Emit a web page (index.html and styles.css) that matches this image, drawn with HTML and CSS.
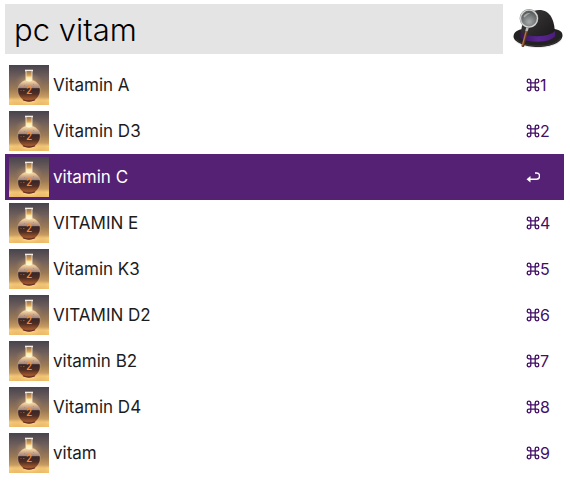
FILE: index.html
```html
<!DOCTYPE html>
<html lang="en">
<head>
<meta charset="utf-8">
<title>Launcher</title>
<link rel="stylesheet" href="styles.css">
</head>
<body>
<svg class="defs" aria-hidden="true">
  <defs>
    <linearGradient id="wall" x1="0" y1="0" x2="0" y2="1">
      <stop offset="0" stop-color="#47434d"/>
      <stop offset=".3" stop-color="#6f5f5b"/>
      <stop offset=".6" stop-color="#9c7a55"/>
      <stop offset=".8" stop-color="#c89c60"/>
      <stop offset=".88" stop-color="#f5cc7c"/>
      <stop offset="1" stop-color="#f0bd66"/>
    </linearGradient>
    <radialGradient id="glow" cx=".5" cy=".5" r=".5">
      <stop offset="0" stop-color="#ffeaa0"/>
      <stop offset=".4" stop-color="#f6c675" stop-opacity=".6"/>
      <stop offset="1" stop-color="#d39b5c" stop-opacity="0"/>
    </radialGradient>
    <linearGradient id="bulb" gradientUnits="userSpaceOnUse" x1="0" y1="14" x2="0" y2="37">
      <stop offset="0" stop-color="#fff0c0"/>
      <stop offset=".12" stop-color="#f2cf98"/>
      <stop offset=".25" stop-color="#c9a68c"/>
      <stop offset=".38" stop-color="#a38379"/>
      <stop offset=".42" stop-color="#35262a"/>
      <stop offset=".65" stop-color="#512d22"/>
      <stop offset=".88" stop-color="#a3592e"/>
      <stop offset="1" stop-color="#6b3020"/>
    </linearGradient>
    <linearGradient id="neck" x1="0" y1="0" x2="0" y2="1">
      <stop offset="0" stop-color="#9c7c5c"/>
      <stop offset=".35" stop-color="#e0a24e"/>
      <stop offset=".6" stop-color="#fff0b4"/>
      <stop offset="1" stop-color="#fff8d8"/>
    </linearGradient>
    <symbol id="flask" viewBox="0 0 40 40">
      <rect width="40" height="40" fill="url(#wall)"/>
      <ellipse cx="20" cy="36" rx="19" ry="7" fill="url(#glow)"/>
      <ellipse cx="20" cy="17" rx="14" ry="10" fill="url(#glow)" opacity=".5"/>
      <path d="M17 14V15C12 16.500 8.800 20.500 8.800 25.500C8.800 29.800 11.500 33.500 15 35.500Q20 37.500 25 35.500C28.500 33.500 31.200 29.800 31.200 25.500C31.200 20.500 28 16.500 23 15V14Z" fill="url(#bulb)" stroke="#e0bda0" stroke-opacity=".6" stroke-width=".7"/>
      <path d="M17 7H23V15.500Q20 17.500 17 15.500Z" fill="url(#neck)"/>
      <path d="M17 6V15M23 6V15" stroke="#f3e2cb" stroke-width=".9"/>
      <path d="M16 5.500H24" stroke="#f7eee2" stroke-width="1.600"/>
      <path d="M14 34.800Q20 37.500 26 34.800" fill="none" stroke="#65291d" stroke-width="1.200"/>
      <path d="M11.500 25.500H12.500M14 25.500H15.500M15 20.500H16M24 19.500H25M24 22H25" stroke="#c97832" stroke-width=".6"/>
      <text x="20" y="29" class="flask-mark">2</text>
    </symbol>
    <symbol id="cmd" viewBox="0 0 14 14">
      <path d="M4.800 4.800H9.200V9.200H4.800ZM4.800 4.800H3A1.800 1.800 0 1 1 4.800 3ZM9.200 4.800V3A1.800 1.800 0 1 1 11 4.800ZM9.200 9.200H11A1.800 1.800 0 1 1 9.200 11ZM4.800 9.200V11A1.800 1.800 0 1 1 3 9.200Z" fill="none" stroke="currentColor" stroke-width="1.300"/>
    </symbol>
    <linearGradient id="felt" x1="0" y1="0" x2="1" y2="1">
      <stop offset="0" stop-color="#3c393a"/>
      <stop offset=".4" stop-color="#302d2e"/>
      <stop offset="1" stop-color="#171516"/>
    </linearGradient>
    <linearGradient id="band" x1="0" y1="0" x2="1" y2="0">
      <stop offset="0" stop-color="#35175c"/>
      <stop offset=".5" stop-color="#5a2591"/>
      <stop offset="1" stop-color="#4a1d7a"/>
    </linearGradient>
    <radialGradient id="lens" cx=".5" cy=".7" r=".7">
      <stop offset="0" stop-color="#a9acac"/>
      <stop offset="1" stop-color="#4b4e4f"/>
    </radialGradient>
  </defs>
</svg>

<main class="launcher">
  <header class="search">
    <input class="query" type="text" aria-label="Search" value="pc vitam" spellcheck="false" autocomplete="off">
    <svg class="hat" viewBox="0 0 52 42" aria-hidden="true">
      <ellipse cx="26" cy="30" rx="24" ry="10" fill="#777" opacity=".18"/>
      <path d="M1.500 28.500C1.500 24 6 21.500 11 21L42 21C47 21.500 50.500 23.500 50.500 27.500C50.500 34 39 39 26 39C13 39 1.500 34 1.500 28.500Z" fill="#242122"/>
      <path d="M4 31.500Q11 38 26 38Q42 38 49 30" fill="none" stroke="#3c383a" stroke-width=".8"/>
      <path d="M9 28C8.500 16 14 2 27 2C38.500 2 42.500 12 43 26Q41 32.500 26.500 33.500Q13 33.500 9 28Z" fill="url(#felt)"/>
      <path d="M8.500 24Q14 28.500 26 28.300Q38 28 43 23L43.300 28Q39 33.500 26 33.800Q13 33.800 8.500 29.500Z" fill="url(#band)"/>
      <path d="M15 21L11 37.500" stroke="#5e3420" stroke-width="3" stroke-linecap="round"/>
      <path d="M14.500 22L10.500 37" stroke="#b0754e" stroke-width="1.200" stroke-linecap="round"/>
      <path d="M15.800 18.500L14.500 23" stroke="#bcbcbc" stroke-width="2.500"/>
      <circle cx="17" cy="10.500" r="8.400" fill="url(#lens)" stroke="#858888" stroke-width="2"/>
      <circle cx="17" cy="10.500" r="8.500" fill="none" stroke="#d6d7d7" stroke-width="1.100"/>
      <path d="M11.500 8.500Q13.500 4.500 18.500 5Q15.500 6 12.500 9.500Z" fill="#e1e3e3" opacity=".5"/>
    </svg>
  </header>
  <ul class="results">
    <li><button class="row" type="button"><svg class="thumb" aria-hidden="true"><use href="#flask"/></svg><span class="label">Vitamin A</span><span class="key"><svg class="cmd" role="img" aria-label="Command"><use href="#cmd"/></svg>1</span></button></li>
    <li><button class="row" type="button"><svg class="thumb" aria-hidden="true"><use href="#flask"/></svg><span class="label">Vitamin D3</span><span class="key"><svg class="cmd" role="img" aria-label="Command"><use href="#cmd"/></svg>2</span></button></li>
    <li><button class="row selected" type="button"><svg class="thumb" aria-hidden="true"><use href="#flask"/></svg><span class="label">vitamin C</span><span class="key"><svg class="cmd" viewBox="0 0 14 14" role="img" aria-label="Return"><path d="M9 3H10.500A2.800 2.800 0 0 1 10.500 9.200H3" fill="none" stroke="currentColor" stroke-width="1.400"/><path d="M.5 9.200L4.500 6V12.400Z" fill="currentColor"/></svg></span></button></li>
    <li><button class="row" type="button"><svg class="thumb" aria-hidden="true"><use href="#flask"/></svg><span class="label">VITAMIN E</span><span class="key"><svg class="cmd" role="img" aria-label="Command"><use href="#cmd"/></svg>4</span></button></li>
    <li><button class="row" type="button"><svg class="thumb" aria-hidden="true"><use href="#flask"/></svg><span class="label">Vitamin K3</span><span class="key"><svg class="cmd" role="img" aria-label="Command"><use href="#cmd"/></svg>5</span></button></li>
    <li><button class="row" type="button"><svg class="thumb" aria-hidden="true"><use href="#flask"/></svg><span class="label">VITAMIN D2</span><span class="key"><svg class="cmd" role="img" aria-label="Command"><use href="#cmd"/></svg>6</span></button></li>
    <li><button class="row" type="button"><svg class="thumb" aria-hidden="true"><use href="#flask"/></svg><span class="label">vitamin B2</span><span class="key"><svg class="cmd" role="img" aria-label="Command"><use href="#cmd"/></svg>7</span></button></li>
    <li><button class="row" type="button"><svg class="thumb" aria-hidden="true"><use href="#flask"/></svg><span class="label">Vitamin D4</span><span class="key"><svg class="cmd" role="img" aria-label="Command"><use href="#cmd"/></svg>8</span></button></li>
    <li><button class="row" type="button"><svg class="thumb" aria-hidden="true"><use href="#flask"/></svg><span class="label">vitam</span><span class="key"><svg class="cmd" role="img" aria-label="Command"><use href="#cmd"/></svg>9</span></button></li>
  </ul>
</main>
</body>
</html>
```
FILE: styles.css
```css
* {
  box-sizing: border-box;
}

body {
  margin: 0;
  background: #fff;
  color: #1c1c1c;
  font-family: Inter, "Liberation Sans", sans-serif;
}

.defs {
  position: absolute;
  width: 0;
  height: 0;
}

.launcher {
  padding: 4px 6px 4px 5px;
}

.search {
  display: flex;
  align-items: center;
  gap: 9px;
  margin-bottom: 8px;
}

.query {
  flex: 1;
  min-width: 0;
  height: 50px;
  padding: 0 9px;
  border: 0;
  outline: 0;
  background: #e4e4e4;
  color: #000;
  font: 300 31px Inter, "Liberation Sans", sans-serif;
}

.hat {
  flex: none;
  width: 52px;
  height: 42px;
}

.results {
  margin: 0;
  padding: 0;
  list-style: none;
}

.row {
  display: flex;
  align-items: center;
  gap: 4px;
  width: 100%;
  height: 46px;
  padding: 0 4px;
  border: 0;
  background: none;
  color: inherit;
  font: 400 17px Inter, "Liberation Sans", sans-serif;
  text-align: left;
}

.selected {
  background: #552174;
  color: #fff;
}

.thumb {
  flex: none;
  width: 40px;
  height: 40px;
}

.flask-mark {
  fill: #ec8f36;
  font: 500 10px Roboto, sans-serif;
  text-anchor: middle;
}

.label {
  flex: 1;
}

.key {
  display: flex;
  align-items: center;
  width: 34px;
  color: #430e66;
  font-size: 16px;
}

.selected .key {
  color: #fff;
}

.cmd {
  flex: none;
  width: 14px;
  height: 14px;
}
```
